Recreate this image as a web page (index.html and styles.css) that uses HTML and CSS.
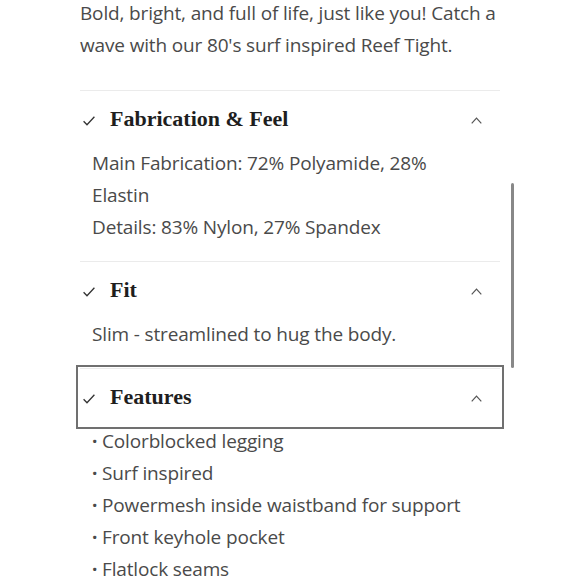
FILE: index.html
```html
<!DOCTYPE html>
<html>
<head>
<meta charset="utf-8">
<link rel="stylesheet" href="styles.css">
</head>
<body>
<div class="page">
  <p class="intro">Bold, bright, and full of life, just like you! Catch a wave with our 80's surf inspired Reef Tight.</p>

  <section class="acc">
    <div class="acc-head">
      <svg class="check" width="12" height="10" viewBox="0 0 12 10"><path d="M0.6 5.2 L4 8.8 L11.4 0.8" fill="none" stroke="#333" stroke-width="1.3"/></svg>
      <h3 class="acc-title">Fabrication &amp; Feel</h3>
      <svg class="chev" width="11" height="7" viewBox="0 0 11 7"><path d="M0.7 6.3 L5.5 1.2 L10.3 6.3" fill="none" stroke="#555" stroke-width="1.2"/></svg>
    </div>
    <div class="acc-body">
      <p>Main Fabrication: 72% Polyamide, 28% Elastin</p>
      <p>Details: 83% Nylon, 27% Spandex</p>
    </div>
  </section>

  <section class="acc">
    <div class="acc-head">
      <svg class="check" width="12" height="10" viewBox="0 0 12 10"><path d="M0.6 5.2 L4 8.8 L11.4 0.8" fill="none" stroke="#333" stroke-width="1.3"/></svg>
      <h3 class="acc-title">Fit</h3>
      <svg class="chev" width="11" height="7" viewBox="0 0 11 7"><path d="M0.7 6.3 L5.5 1.2 L10.3 6.3" fill="none" stroke="#555" stroke-width="1.2"/></svg>
    </div>
    <div class="acc-body">
      <p>Slim - streamlined to hug the body.</p>
    </div>
  </section>

  <section class="acc acc-focus">
    <div class="acc-head focused">
      <svg class="check" width="12" height="10" viewBox="0 0 12 10"><path d="M0.6 5.2 L4 8.8 L11.4 0.8" fill="none" stroke="#333" stroke-width="1.3"/></svg>
      <h3 class="acc-title">Features</h3>
      <svg class="chev" width="11" height="7" viewBox="0 0 11 7"><path d="M0.7 6.3 L5.5 1.2 L10.3 6.3" fill="none" stroke="#555" stroke-width="1.2"/></svg>
    </div>
    <ul class="bullets">
      <li>Colorblocked legging</li>
      <li>Surf inspired</li>
      <li>Powermesh inside waistband for support</li>
      <li>Front keyhole pocket</li>
      <li>Flatlock seams</li>
    </ul>
  </section>
</div>
<div class="scrollbar"></div>
</body>
</html>
```

FILE: styles.css
```css
html, body {
  margin: 0;
  padding: 0;
  background: #fff;
  overflow: hidden;
}
body {
  font-family: "Open Sans", "Liberation Sans", sans-serif;
  color: #4a4a4a;
  font-size: 19px;
  letter-spacing: -0.15px;
}
.page {
  width: 420px;
  margin-left: 80px;
}
.intro {
  margin: -3px 0 0;
  line-height: 32px;
  padding-bottom: 29px;
  border-bottom: 1px solid #ebebeb;
}
.acc {
  border-bottom: 1px solid #ebebeb;
}
.acc-focus {
  border-bottom: none;
}
.acc-head {
  display: flex;
  align-items: center;
  height: 56px;
  padding: 0 18px 0 3px;
  box-sizing: border-box;
}
.focused {
  outline: 2px solid #707070;
  outline-offset: 2px;
}
.check {
  flex: none;
  margin: 4px 15px 0 0;
}
.chev {
  flex: none;
  margin: 2px 0 0 auto;
}
.acc-title {
  margin: 0;
  font-family: "Liberation Serif", serif;
  font-weight: bold;
  font-size: 22px;
  letter-spacing: 0;
  color: #1e1e1e;
}
.acc-body {
  padding: 0 40px 18px 12px;
}
.acc-body p {
  margin: 0;
  line-height: 32px;
}
.bullets {
  list-style: none;
  margin: 0;
  padding: 0 0 0 12px;
}
.bullets li {
  line-height: 32px;
}
.bullets li::before {
  content: "\00B7";
  display: inline-block;
  width: 10px;
  font-weight: bold;
}
.scrollbar {
  position: absolute;
  left: 511px;
  top: 183px;
  width: 3px;
  height: 185px;
  border-radius: 2px;
  background: #888;
}
```
